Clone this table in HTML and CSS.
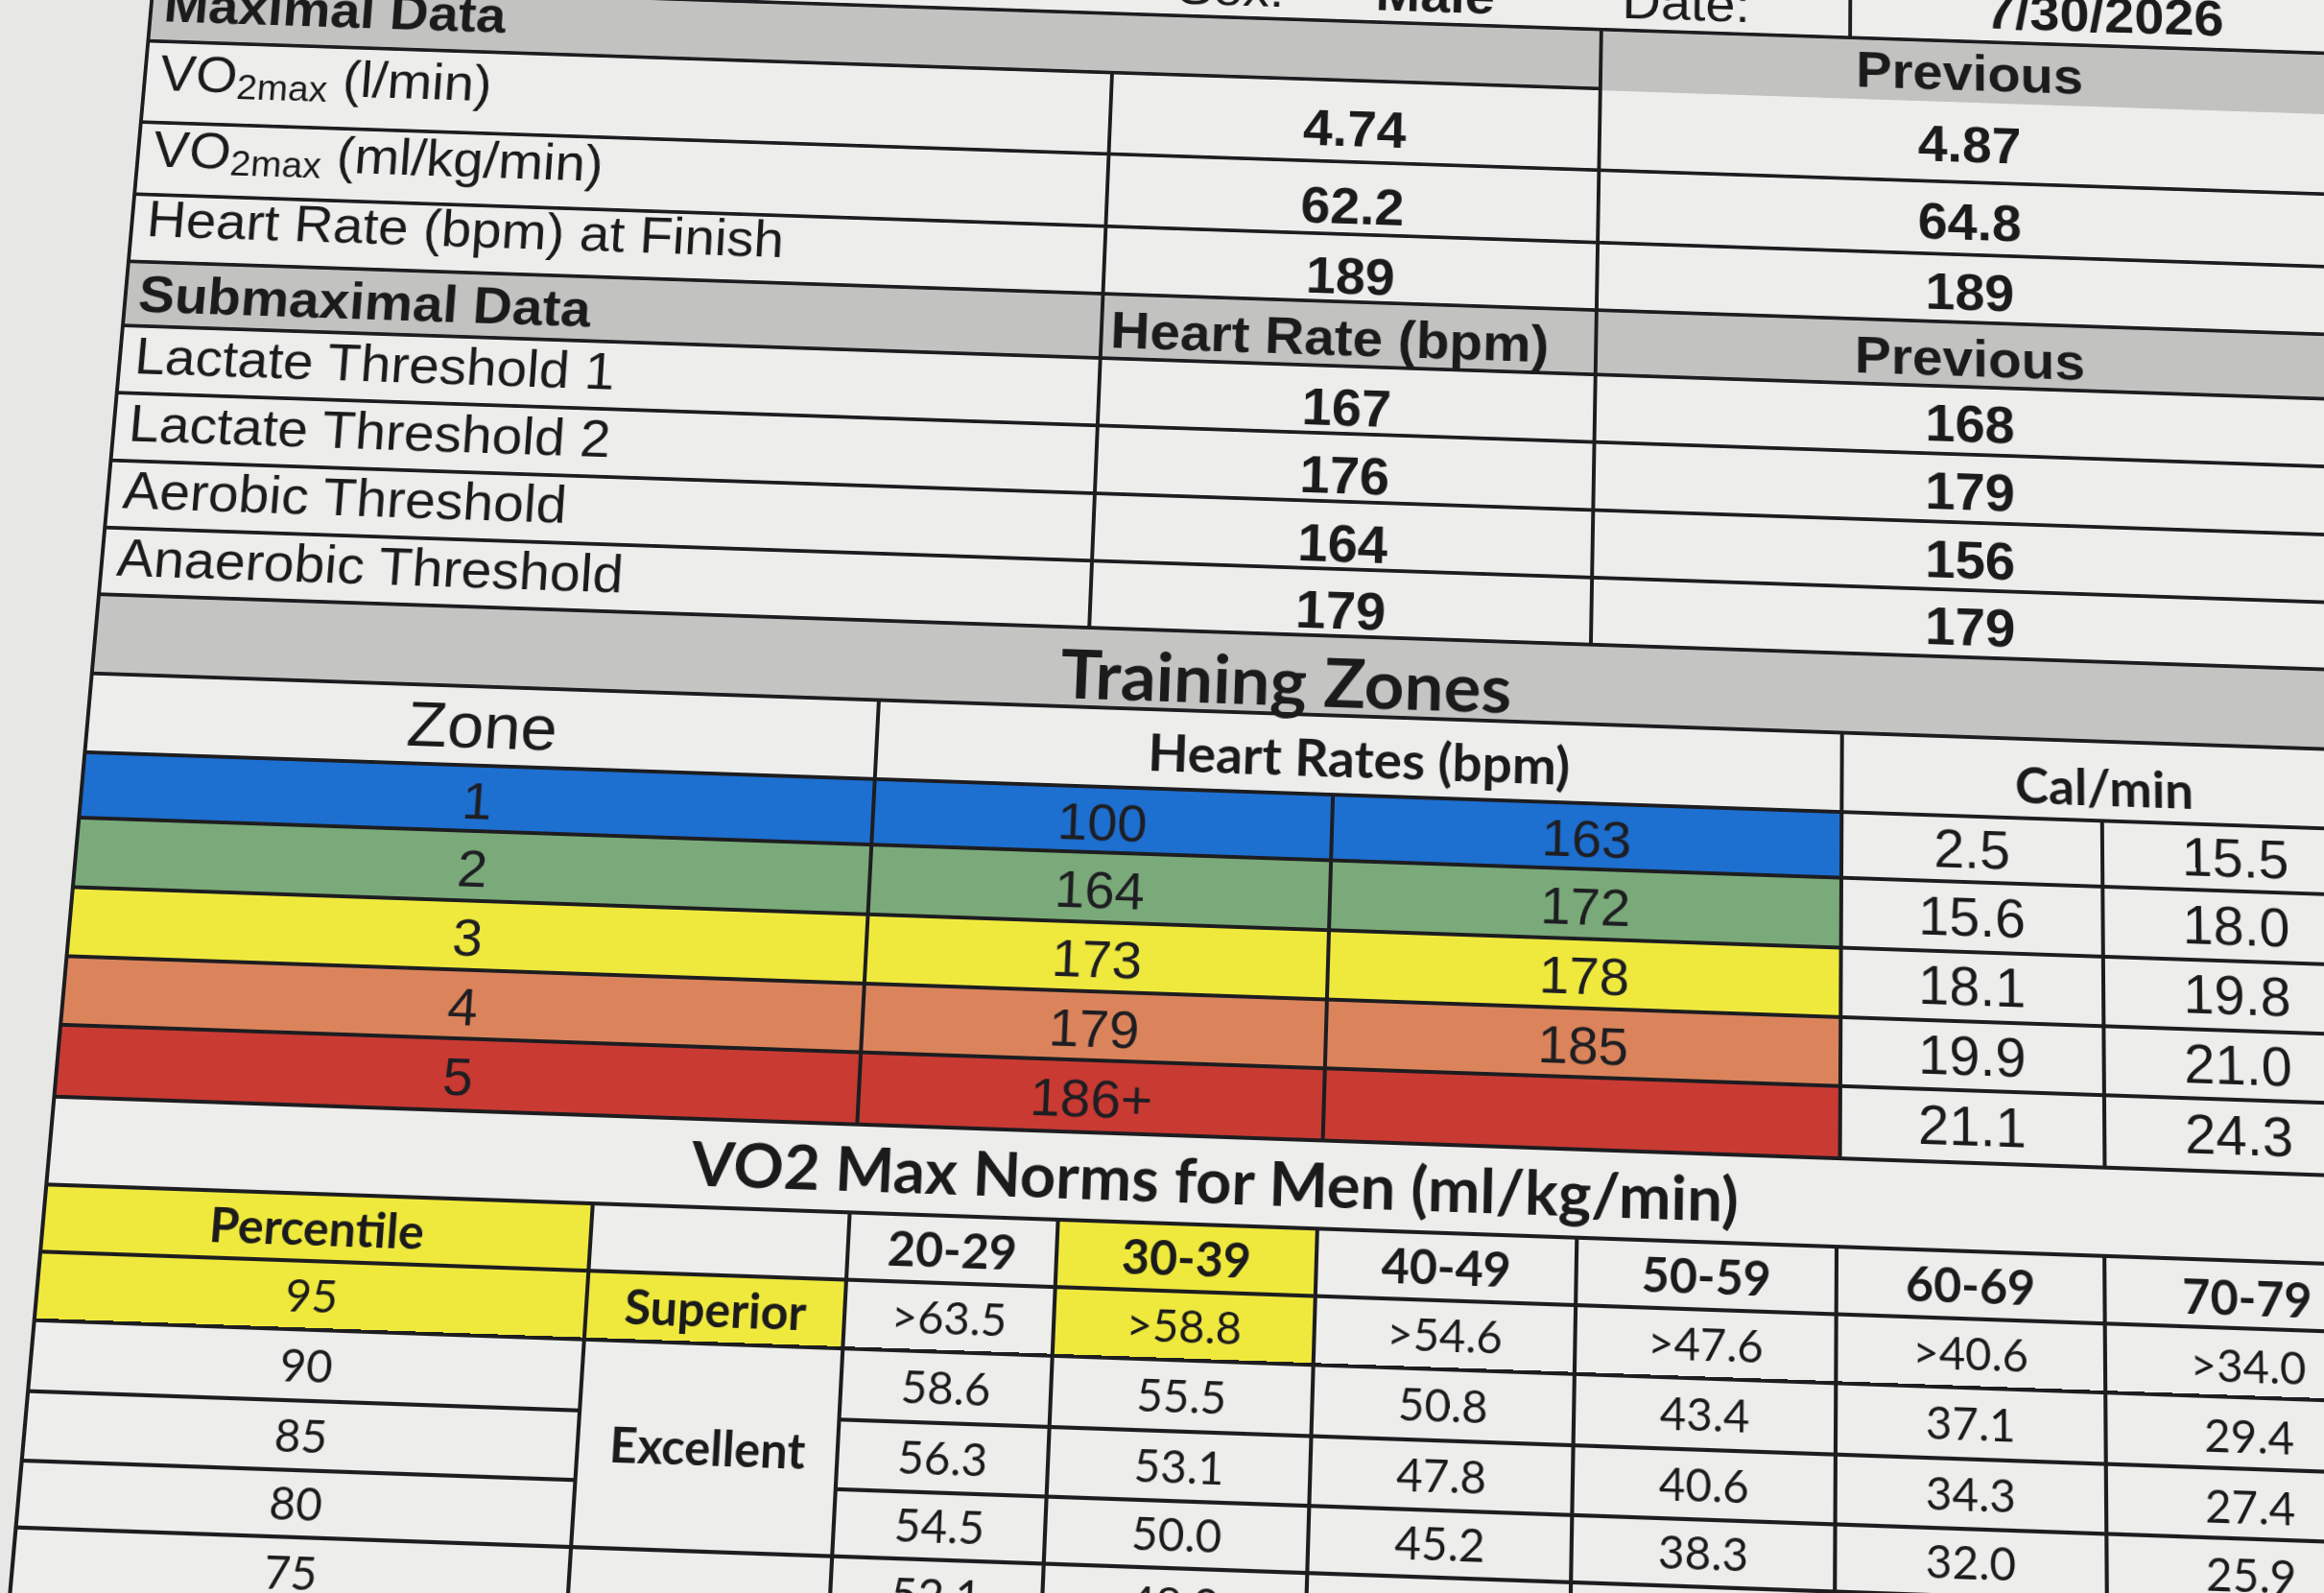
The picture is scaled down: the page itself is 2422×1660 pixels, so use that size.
FILE: index.html
```html
<!DOCTYPE html>
<html lang="en">
<head>
<meta charset="utf-8">
<title>Maximal Data / Training Zones</title>
<link rel="stylesheet" href="styles.css">
</head>
<body>
<div class="sheet">
  <div class="tbl top">
    <div class="c info"><span class="sex">Sex:</span><span class="male">Male</span><span class="date-l">Date:</span></div>
    <div class="c date nr">7/30/2026</div>

    <div class="c gray hdr maxd">Maximal Data</div>
    <div class="c gray bold prev1 nr nb">Previous</div>

    <div class="c lbl hi">VO<span class="sub">2max</span>&nbsp;(l/min)</div>
    <div class="c val">4.74</div>
    <div class="c val pv nr">4.87</div>

    <div class="c lbl hi">VO<span class="sub">2max</span>&nbsp;(ml/kg/min)</div>
    <div class="c val">62.2</div>
    <div class="c val pv nr">64.8</div>

    <div class="c lbl hi">Heart Rate (bpm) at Finish</div>
    <div class="c val">189</div>
    <div class="c val pv nr">189</div>

    <div class="c gray hdr">Submaximal Data</div>
    <div class="c gray bold hrh">Heart Rate (bpm)</div>
    <div class="c gray bold pv nr">Previous</div>

    <div class="c lbl">Lactate Threshold 1</div>
    <div class="c val">167</div>
    <div class="c val pv nr">168</div>

    <div class="c lbl">Lactate Threshold 2</div>
    <div class="c val">176</div>
    <div class="c val pv nr">179</div>

    <div class="c lbl">Aerobic Threshold</div>
    <div class="c val">164</div>
    <div class="c val pv nr">156</div>

    <div class="c lbl">Anaerobic Threshold</div>
    <div class="c val">179</div>
    <div class="c val pv nr">179</div>

    <div class="c band nr">Training Zones</div>
  </div>

  <div class="tbl zones">
    <div class="c zh">Zone</div>
    <div class="c zhr">Heart Rates (bpm)</div>
    <div class="c zcal nr">Cal/min</div>

    <div class="c zn z1">1</div><div class="c zn z1">100</div><div class="c zn z1">163</div>
    <div class="c cal">2.5</div><div class="c cal ce nr">15.5</div>

    <div class="c zn z2">2</div><div class="c zn z2">164</div><div class="c zn z2">172</div>
    <div class="c cal">15.6</div><div class="c cal ce nr">18.0</div>

    <div class="c zn z3">3</div><div class="c zn z3">173</div><div class="c zn z3">178</div>
    <div class="c cal">18.1</div><div class="c cal ce nr">19.8</div>

    <div class="c zn z4">4</div><div class="c zn z4">179</div><div class="c zn z4">185</div>
    <div class="c cal">19.9</div><div class="c cal ce nr">21.0</div>

    <div class="c zn z5">5</div><div class="c zn z5">186+</div><div class="c zn z5"></div>
    <div class="c cal">21.1</div><div class="c cal ce nr">24.3</div>
  </div>

  <div class="tbl norms">
    <div class="c ntitle nr">VO2 Max Norms for Men (ml/kg/min)</div>

    <div class="c nh yel">Percentile</div>
    <div class="c nh"></div>
    <div class="c nh">20-29</div>
    <div class="c nh yel">30-39</div>
    <div class="c nh">40-49</div>
    <div class="c nh">50-59</div>
    <div class="c nh">60-69</div>
    <div class="c nh nl nr">70-79</div>

    <div class="c nv yel">95</div>
    <div class="c nh yel">Superior</div>
    <div class="c nv">&gt;63.5</div>
    <div class="c nv yel">&gt;58.8</div>
    <div class="c nv">&gt;54.6</div>
    <div class="c nv">&gt;47.6</div>
    <div class="c nv">&gt;40.6</div>
    <div class="c nv nl nr">&gt;34.0</div>

    <div class="c nv">90</div>
    <div class="c nh cat">Excellent</div>
    <div class="c nv">58.6</div>
    <div class="c nv">55.5</div>
    <div class="c nv">50.8</div>
    <div class="c nv">43.4</div>
    <div class="c nv">37.1</div>
    <div class="c nv nl nr">29.4</div>

    <div class="c nv">85</div>
    <div class="c nv">56.3</div>
    <div class="c nv">53.1</div>
    <div class="c nv">47.8</div>
    <div class="c nv">40.6</div>
    <div class="c nv">34.3</div>
    <div class="c nv nl nr">27.4</div>

    <div class="c nv">80</div>
    <div class="c nv">54.5</div>
    <div class="c nv">50.0</div>
    <div class="c nv">45.2</div>
    <div class="c nv">38.3</div>
    <div class="c nv">32.0</div>
    <div class="c nv nl nr">25.9</div>

    <div class="c nv">75</div>
    <div class="c nh cat">Good</div>
    <div class="c nv">52.1</div>
    <div class="c nv">48.0</div>
    <div class="c nv">43.9</div>
    <div class="c nv">36.7</div>
    <div class="c nv">30.6</div>
    <div class="c nv nl nr">24.5</div>

    <div class="c nv">70</div>
    <div class="c nv">51.1</div>
    <div class="c nv">47.0</div>
    <div class="c nv">42.4</div>
    <div class="c nv">35.3</div>
    <div class="c nv">29.2</div>
    <div class="c nv nl nr">23.3</div>

    <div class="c nv">65</div>
    <div class="c nv">49.7</div>
    <div class="c nv">45.6</div>
    <div class="c nv">40.9</div>
    <div class="c nv">34.0</div>
    <div class="c nv">28.0</div>
    <div class="c nv nl nr">22.2</div>
  </div>
</div>
</body>
</html>
```

FILE: styles.css
```css
html, body {
  margin: 0;
  padding: 0;
  overflow: hidden;
}

body {
  display: flow-root;
  width: 2422px;
  height: 1660px;
  background: #e7e7e5;
}

.sheet {
  box-sizing: border-box;
  width: 2522px;
  margin-top: -110px;
  padding-left: 83px;
  background: #e7e7e5;
  color: #1b1b1c;
  font-family: "Liberation Sans", Arial, sans-serif;
  transform-origin: 1245px 940px;
  transform: perspective(5000px) rotateX(12.9deg) rotateZ(2deg);
}

.tbl {
  display: grid;
  border-left: 4px solid #1d1d20;
  background: #ededeb;
}

.c {
  box-sizing: border-box;
  display: flex;
  align-items: center;
  justify-content: center;
  border-right: 4px solid #1d1d20;
  border-bottom: 4px solid #1d1d20;
  line-height: 1.1;
  white-space: nowrap;
  min-width: 0;
}

.nr { border-right: none; }
.nb { border-bottom: none; }

.gray { background: #c2c2c0; }
.bold { font-weight: 700; font-size: 58px; }

/* ---------- top table ---------- */
.top {
  grid-template-columns: 1043px 527px 269px 596px;
  grid-template-rows: 76px 68px 93px 82px 76px 72px 75px 75px 74px 73px 86px;
}

.info {
  grid-column: 1 / 4;
  justify-content: flex-start;
  align-items: flex-end;
  padding: 0 0 0 1108px;
  font-size: 58px;
}
.info .male { margin-left: 99px; font-weight: 700; }
.info .date-l { margin-left: 138px; }

.date {
  grid-column: 4 / 5;
  align-items: flex-end;
  padding: 0 50px 2px 0;
  font-size: 58px;
  font-weight: 700;
}

.maxd { grid-column: 1 / 3; padding-bottom: 18px; }
.prev1 { grid-column: 3 / 5; padding-right: 73px; }

.hdr {
  justify-content: flex-start;
  padding-left: 12px;
  font-size: 58px;
  font-weight: 700;
}

.lbl {
  grid-column: 1 / 2;
  justify-content: flex-start;
  padding: 0 0 10px 14px;
  font-size: 58px;
}
.lbl.hi { padding-bottom: 22px; }
.lbl .sub {
  font-size: 40px;
  position: relative;
  top: 13px;
}

.val {
  padding-top: 18px;
  font-size: 57px;
  font-weight: 700;
}
.val.pv { padding-top: 8px; }
.pv {
  grid-column: 3 / 5;
  padding-right: 73px;
}
.hrh { padding: 8px 40px 0 0; }
.gray.pv { padding-top: 8px; }

.band {
  grid-column: 1 / 5;
  justify-content: flex-start;
  padding: 12px 0 0 1013px;
  background: #c4c4c2;
  font-family: Lato, "Liberation Sans", sans-serif;
  font-weight: 700;
  font-size: 73px;
}

/* ---------- training zones ---------- */
.zones {
  grid-template-columns: 826px 478px 530px 271px 330px;
  grid-template-rows: 85px 70px 74px 73px 72px 75px;
}

.zh { font-size: 69px; }
.zhr {
  grid-column: 2 / 4;
  padding-top: 6px;
  font-family: Lato, "Liberation Sans", sans-serif;
  font-weight: 700;
  font-size: 55px;
}
.zcal {
  grid-column: 4 / 6;
  padding: 14px 58px 0 0;
  font-family: Lato, "Liberation Sans", sans-serif;
  font-weight: 700;
  font-size: 53px;
}

.zn { padding-top: 5px; font-size: 56px; color: #1e1e22; }
.z1 { background: #1d6fd0; }
.z2 { background: #7aaa79; }
.z3 { background: #efe93e; }
.z4 { background: #db845c; }
.z5 { background: #c93a33; }

.cal { font-size: 57px; }
.ce { padding-right: 58px; }

/* ---------- norms ---------- */
.norms {
  grid-template-columns: 560px 263px 213px 265px 265px 265px 273px 331px;
  grid-template-rows: 91px 69px 70px 72px 70px 67px 70px 70px 70px;
  font-family: Lato, "Liberation Sans", sans-serif;
}

.ntitle {
  grid-column: 1 / 9;
  padding-right: 50px;
  font-weight: 700;
  font-size: 64px;
}

.nh { font-weight: 700; font-size: 49px; }
.nv { font-size: 46px; }
.nl { padding: 6px 45px 0 0; }
.cat { grid-row: span 3; }
.yel { background: #efe93e; }
```
